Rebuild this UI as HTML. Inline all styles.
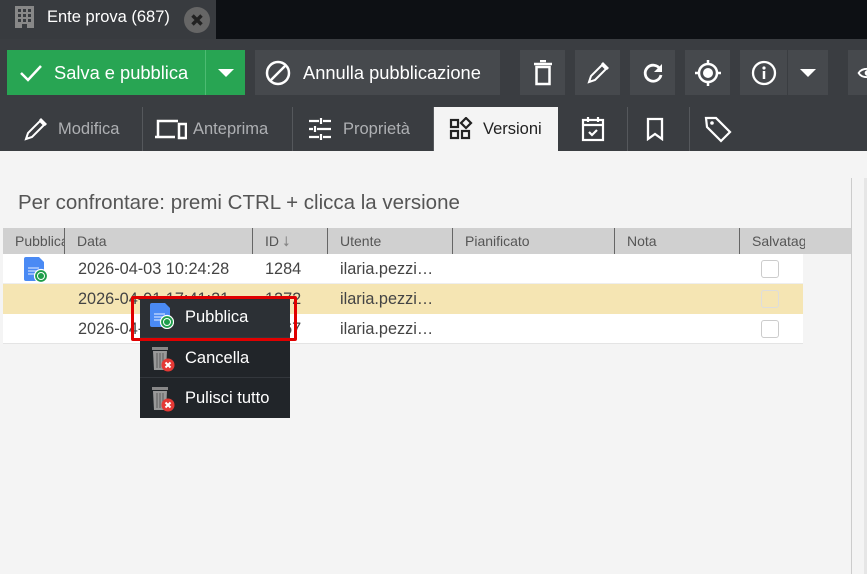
<!DOCTYPE html>
<html><head><meta charset="utf-8"><style>
*{box-sizing:border-box;margin:0;padding:0}
body{width:867px;height:574px;overflow:hidden;background:#f4f4f4;font-family:"Liberation Sans",sans-serif;position:relative}
.abs{position:absolute}
.top{left:0;top:0;width:867px;height:39px;background:#0d1014}
.tab{left:0;top:0;width:216px;height:39px;background:#383b3f;color:#fff;font-size:16.5px}
.tb{left:0;top:39px;width:867px;height:112px;background:#3a3d41}
.btn{position:absolute;top:50px;height:45px;background:#46494d;display:flex;align-items:center;justify-content:center;color:#fff;font-size:18.3px}
.t{position:absolute;top:107px;height:44px;display:flex;align-items:center;color:#aeb0b3;font-size:16.5px;border-right:1px solid #55585c}
.th{position:absolute;top:228px;height:26px;font-size:14px;color:#555;line-height:26px;padding-left:12px;border-left:1px solid #666}
.row{position:absolute;left:3px;width:800px;height:30px;font-size:16.3px;color:#444;line-height:30px}
.row span{position:absolute}
.cb{position:absolute;left:758px;top:6px;width:18px;height:18px;border:1px solid #ccc;border-radius:3px;background:#fff}
.mi{position:absolute;left:140px;width:150px;height:41px;color:#fff;font-size:16.5px;display:flex;align-items:center;padding-left:45px}
</style></head><body>
<div class="abs top"></div>
<div class="abs tab">
<svg class="abs" style="left:15px;top:6px" width="19" height="22" viewBox="0 0 19 22"><rect width="19" height="22" fill="#888"/><g fill="#383b3f"><rect x="3" y="3" width="3" height="3"/><rect x="8" y="3" width="3" height="3"/><rect x="13" y="3" width="3" height="3"/><rect x="3" y="8" width="3" height="3"/><rect x="8" y="8" width="3" height="3"/><rect x="13" y="8" width="3" height="3"/><rect x="3" y="13" width="3" height="3"/><rect x="8" y="13" width="3" height="3"/><rect x="13" y="13" width="3" height="3"/><rect x="7" y="18" width="5" height="4"/></g></svg>
<span class="abs" style="left:47px;top:8px">Ente prova (687)</span>
<svg class="abs" style="left:184px;top:7px" width="26" height="26" viewBox="0 0 26 26"><circle cx="13" cy="13" r="13" fill="#666"/><path d="M8.5 8.5L17.5 17.5M17.5 8.5L8.5 17.5" stroke="#222" stroke-width="3.5"/></svg>
</div>
<div class="abs tb"></div>
<div class="btn" style="left:7px;width:198px;background:#28a553;justify-content:flex-start;padding-left:12px"><svg width="24" height="20" viewBox="0 0 24 20"><path d="M2 10l7 7L22 3" stroke="#fff" stroke-width="2.5" fill="none"/></svg><span style="margin-left:11px">Salva e pubblica</span></div>
<div class="btn" style="left:205px;width:40px;background:#28a553;border-left:1px solid #4cbb72"><svg width="16" height="10"><path d="M0 1h16L8 9z" fill="#fff"/></svg></div>
<div class="btn" style="left:255px;width:245px;justify-content:flex-start;padding-left:10px"><svg width="26" height="26" viewBox="0 0 26 26"><circle cx="13" cy="13" r="11" stroke="#fff" stroke-width="2.5" fill="none"/><path d="M6 20L20 6" stroke="#fff" stroke-width="2.5"/></svg><span style="margin-left:12px">Annulla pubblicazione</span></div>
<div class="btn" style="left:520px;width:45px"><svg width="20" height="26" viewBox="0 0 20 26"><path d="M1 4h18M7 1h6" stroke="#fff" stroke-width="2.5"/><rect x="3.5" y="7" width="13" height="17" stroke="#fff" stroke-width="2.5" fill="none"/></svg></div>
<div class="btn" style="left:575px;width:45px"><svg width="24" height="24" viewBox="0 0 24 24"><path d="M3 21l2-6L16 4l4 4L9 19z" stroke="#fff" stroke-width="2" fill="none"/><path d="M15 3l2-2 6 6-2 2z" fill="#fff"/></svg></div>
<div class="btn" style="left:630px;width:45px"><svg width="24" height="24" viewBox="0 0 24 24"><path d="M19 8A8 8 0 1 0 20 14" stroke="#fff" stroke-width="2.8" fill="none"/><path d="M21 3v8h-8z" fill="#fff"/></svg></div>
<div class="btn" style="left:685px;width:45px"><svg width="28" height="28" viewBox="0 0 28 28"><circle cx="14" cy="14" r="9" stroke="#fff" stroke-width="2.5" fill="none"/><circle cx="14" cy="14" r="5" fill="#fff"/><path d="M14 1v4M14 23v4M1 14h4M23 14h4" stroke="#fff" stroke-width="2.5"/></svg></div>
<div class="btn" style="left:740px;width:47px"><svg width="26" height="26" viewBox="0 0 26 26"><circle cx="13" cy="13" r="11" stroke="#fff" stroke-width="2.3" fill="none"/><circle cx="13" cy="8" r="1.6" fill="#fff"/><path d="M13 11v8" stroke="#fff" stroke-width="2.5"/></svg></div>
<div class="btn" style="left:788px;width:40px"><svg width="16" height="10"><path d="M0 1h16L8 9z" fill="#fff"/></svg></div>
<div class="btn" style="left:848px;width:30px;justify-content:flex-start;padding-left:9px"><svg width="26" height="20" viewBox="0 0 26 20"><path d="M2 10C6 3 20 3 24 10C20 17 6 17 2 10z" stroke="#fff" stroke-width="2.3" fill="none"/><circle cx="13" cy="10" r="3.5" fill="#fff"/></svg></div>

<div class="t" style="left:0;width:143px;padding-left:23px"><svg width="26" height="26" viewBox="0 0 26 26"><path d="M3 23l2-6L17 5l4 4L9 21z" stroke="#fff" stroke-width="2" fill="none"/><path d="M16 4l2-2 6 6-2 2z" fill="#fff"/></svg><span style="margin-left:9px">Modifica</span></div>
<div class="t" style="left:143px;width:150px;padding-left:12px"><svg width="32" height="22" viewBox="0 0 32 22"><path d="M3 18V3h20" stroke="#fff" stroke-width="2.5" fill="none"/><path d="M0 19h20" stroke="#fff" stroke-width="2.5"/><rect x="24" y="6" width="7" height="14" stroke="#fff" stroke-width="2.5" fill="none"/></svg><span style="margin-left:6px">Anteprima</span></div>
<div class="t" style="left:293px;width:141px;padding-left:15px"><svg width="24" height="24" viewBox="0 0 24 24" stroke="#fff" stroke-width="2.2"><path d="M1 4h10M15 4h8M1 12h4M9 12h14M1 20h10M15 20h8M13 1v6M7 9v6M13 17v6"/></svg><span style="margin-left:11px">Proprietà</span></div>
<div class="t" style="left:434px;width:124px;background:#f4f4f4;color:#222;padding-left:15px;border:none"><svg width="24" height="24" viewBox="0 0 24 24" fill="none" stroke="#222" stroke-width="2.2"><rect x="2" y="3" width="7" height="7"/><rect x="2" y="14" width="7" height="7"/><rect x="13" y="14" width="7" height="7"/><path d="M17 1l5 5-5 5-5-5z"/></svg><span style="margin-left:10px">Versioni</span></div>
<div class="t" style="left:558px;width:70px;padding-left:23px"><svg width="24" height="26" viewBox="0 0 24 26" fill="none" stroke="#fff" stroke-width="2.2"><rect x="2" y="4" width="20" height="20"/><path d="M2 9h20M7 1v5M17 1v5M8 16l3 3 5-5"/></svg></div>
<div class="t" style="left:628px;width:62px;padding-left:17px"><svg width="20" height="24" viewBox="0 0 20 24"><path d="M3 2h14v20l-7-5-7 5z" stroke="#fff" stroke-width="2.3" fill="none"/></svg></div>
<div class="t" style="left:690px;width:56px;padding-left:14px;border:none"><svg width="28" height="28" viewBox="0 0 28 28"><path d="M2 3h10l14 14-9 9L3 12z" stroke="#fff" stroke-width="2.2" fill="none"/><circle cx="8" cy="8" r="1.8" fill="#fff"/></svg></div>

<div class="abs" style="left:18px;top:191px;font-size:20.5px;color:#555">Per confrontare: premi CTRL + clicca la versione</div>
<div class="abs" style="left:851px;top:178px;width:1px;height:396px;background:#ccc"></div>
<div class="abs" style="left:864px;top:178px;width:3px;height:396px;background:#e6e6e6"></div>
<div class="abs" style="left:3px;top:228px;width:848px;height:26px;background:#d0d0d0"></div>
<div class="th" style="left:3px;width:62px;padding-left:12px;border:none;overflow:hidden;white-space:nowrap">Pubblica</div>
<div class="th" style="left:64px;width:189px">Data</div>
<div class="th" style="left:252px;width:75px">ID <span style="color:#888">⭣</span></div>
<div class="th" style="left:327px;width:126px">Utente</div>
<div class="th" style="left:452px;width:162px">Pianificato</div>
<div class="th" style="left:614px;width:125px">Nota</div>
<div class="th" style="left:739px;width:66px;overflow:hidden;white-space:nowrap">Salvataggio</div>

<div class="row" style="top:254px;background:#fff;border-bottom:1px solid #eee"><svg style="position:absolute;left:21px;top:3px" width="24" height="26" viewBox="0 0 24 26"><path d="M0 2Q0 0 2 0h13l5 5v17q0 2-2 2H2q-2 0-2-2z" fill="#4a8af4"/><path d="M4 11h11M4 14h11M4 17h8" stroke="#c8dcff" stroke-width="1.3"/><circle cx="17" cy="19" r="6.5" fill="#1e9e4a" stroke="#fff" stroke-width="1.2"/><circle cx="17" cy="19" r="3.5" fill="none" stroke="#fff" stroke-width="1"/></svg><span style="left:75px">2026-04-03 10:24:28</span><span style="left:262px">1284</span><span style="left:337px">ilaria.pezzi…</span><div class="cb"></div></div>
<div class="row" style="top:284px;background:#f5e5b3"><span style="left:75px">2026-04-01 17:41:21</span><span style="left:262px">1272</span><span style="left:337px">ilaria.pezzi…</span><div class="cb" style="background:#f5e5b3;border-color:#ddd"></div></div>
<div class="row" style="top:314px;background:#fff;border-bottom:1px solid #e4e4e4"><span style="left:75px">2026-04-01 12:00:00</span><span style="left:262px">1267</span><span style="left:337px">ilaria.pezzi…</span><div class="cb"></div></div>

<div class="abs" style="left:140px;top:297px;width:150px;height:121px;background:#212529"></div>
<div class="mi" style="top:297px;background:#2c3035"><svg style="position:absolute;left:10px;top:6px" width="24" height="26" viewBox="0 0 24 26"><path d="M0 2Q0 0 2 0h13l5 5v17q0 2-2 2H2q-2 0-2-2z" fill="#4a8af4"/><path d="M4 11h11M4 14h11M4 17h8" stroke="#c8dcff" stroke-width="1.3"/><circle cx="17" cy="19" r="6.5" fill="#1e9e4a" stroke="#fff" stroke-width="1.2"/><circle cx="17" cy="19" r="3.5" fill="none" stroke="#fff" stroke-width="1"/></svg>Pubblica</div>
<div class="mi" style="top:337px;border-top:1px solid #33373c"><svg style="position:absolute;left:10px;top:7px" width="26" height="28" viewBox="0 0 26 28"><rect x="2" y="2" width="16" height="3" fill="#888"/><path d="M3 6h14l-1 19H4z" fill="#999"/><path d="M7 8v15M10 8v15M13 8v15" stroke="#666" stroke-width="1.2"/><circle cx="18" cy="20" r="6.5" fill="#e53935"/><path d="M15.5 17.5l5 5M20.5 17.5l-5 5" stroke="#fff" stroke-width="2"/></svg>Cancella</div>
<div class="mi" style="top:377px;border-top:1px solid #33373c"><svg style="position:absolute;left:10px;top:7px" width="26" height="28" viewBox="0 0 26 28"><rect x="2" y="2" width="16" height="3" fill="#888"/><path d="M3 6h14l-1 19H4z" fill="#999"/><path d="M7 8v15M10 8v15M13 8v15" stroke="#666" stroke-width="1.2"/><circle cx="18" cy="20" r="6.5" fill="#e53935"/><path d="M15.5 17.5l5 5M20.5 17.5l-5 5" stroke="#fff" stroke-width="2"/></svg>Pulisci tutto</div>
<div class="abs" style="left:131px;top:296px;width:166px;height:45px;border:3px solid #e00000;border-radius:2px"></div>
</body></html>
